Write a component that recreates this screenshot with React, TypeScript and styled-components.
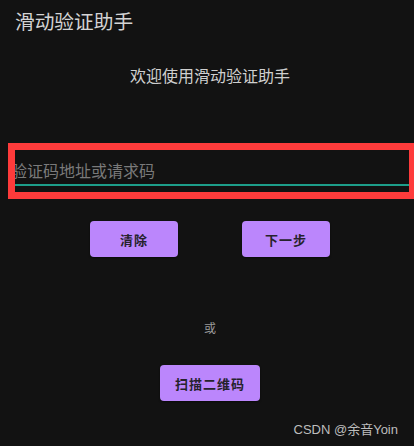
import React from "react";
import styled, { createGlobalStyle } from "styled-components";

const GlobalStyle = createGlobalStyle`
  html, body {
    margin: 0;
    padding: 0;
    background: #121212;
  }
  body {
    font-family: "Noto Sans CJK SC", "Noto Sans", sans-serif;
  }
`;

const Screen = styled.div`
  width: 414px;
  height: 446px;
  background: #121212;
  display: flex;
  flex-direction: column;
  overflow: hidden;
`;

const AppBar = styled.div`
  height: 24px;
  margin-top: 9px;
  padding-left: 15px;
  font-size: 19.7px;
  line-height: 24px;
  color: #d4d4d4;
`;

const Welcome = styled.div`
  margin-top: 30px;
  height: 24px;
  line-height: 24px;
  font-size: 16px;
  color: #cfcfcf;
  text-align: center;
  padding-left: 6px;
`;

const Highlight = styled.div`
  margin-top: 56px;
  margin-left: 8px;
  width: 394px;
  height: 42px;
  border: 7px solid #fe3b3b;
  border-right-width: 5px;
  display: flex;
  flex-direction: column;
  overflow: hidden;
`;

const Field = styled.div`
  height: 34px;
  display: flex;
  align-items: flex-end;
  overflow: hidden;
  border-bottom: 2px solid #1d9e8a;
`;

const Placeholder = styled.span`
  margin-left: -4px;
  margin-bottom: 3px;
  font-size: 16px;
  line-height: 22px;
  color: #7a7a7a;
  white-space: nowrap;
`;

const ButtonRow = styled.div`
  margin-top: 22px;
  display: flex;
  justify-content: center;
  gap: 64px;
  padding-left: 6px;
`;

const PurpleButton = styled.button<{ w: number }>`
  width: ${(p) => p.w}px;
  height: 36px;
  border: none;
  border-radius: 4px;
  background: #bb86fc;
  color: #26222c;
  font-family: "Noto Sans CJK SC", "Noto Sans", sans-serif;
  font-size: 13px;
  font-weight: bold;
  letter-spacing: 1px;
  padding: 0;
  box-shadow: 0 1px 2px rgba(0, 0, 0, 0.5);
`;

const OrText = styled.div`
  margin-top: 62px;
  height: 18px;
  line-height: 18px;
  font-size: 12px;
  color: #9a9a9a;
  text-align: center;
  padding-left: 6px;
`;

const CenterRow = styled.div`
  margin-top: 28px;
  display: flex;
  justify-content: center;
  padding-left: 6px;
`;

const Watermark = styled.div`
  margin-top: auto;
  margin-bottom: 7px;
  padding-right: 16px;
  text-align: right;
  font-family: "Liberation Sans", "Noto Sans CJK SC", sans-serif;
  font-size: 13px;
  line-height: 18px;
  color: #bdbdbd;
`;

export default function App() {
  return (
    <Screen>
      <GlobalStyle />
      <AppBar>滑动验证助手</AppBar>
      <Welcome>欢迎使用滑动验证助手</Welcome>
      <Highlight>
        <Field>
          <Placeholder>验证码地址或请求码</Placeholder>
        </Field>
      </Highlight>
      <ButtonRow>
        <PurpleButton w={88}>清除</PurpleButton>
        <PurpleButton w={88}>下一步</PurpleButton>
      </ButtonRow>
      <OrText>或</OrText>
      <CenterRow>
        <PurpleButton w={100}>扫描二维码</PurpleButton>
      </CenterRow>
      <Watermark>CSDN @余音Yoin</Watermark>
    </Screen>
  );
}
